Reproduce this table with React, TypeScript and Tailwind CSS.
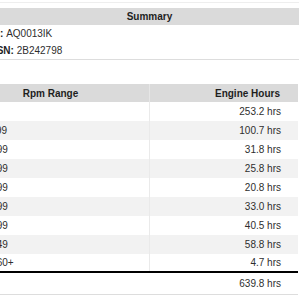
const summary = [
  { label: "ID:", value: "AQ0013IK" },
  { label: "ESN:", value: "2B242798" },
];

const rows = [
  { range: "0-599", hours: "253.2 hrs" },
  { range: "1000-1199", hours: "100.7 hrs" },
  { range: "1200-1599", hours: "31.8 hrs" },
  { range: "1600-1999", hours: "25.8 hrs" },
  { range: "2000-2399", hours: "20.8 hrs" },
  { range: "2400-2799", hours: "33.0 hrs" },
  { range: "2800-3199", hours: "40.5 hrs" },
  { range: "3200-3649", hours: "58.8 hrs" },
  { range: "3650-4560+", hours: "4.7 hrs" },
];

export default function App() {
  return (
    <div className="w-[300px] h-[300px] overflow-hidden bg-white text-[10px] text-[#2e2e2e] font-['Liberation_Sans',Arial,sans-serif]">
      <div className="pt-[2px]">
        <div className="w-[299px] border-t border-[#eeeeee]" />
      </div>

      {/* summary */}
      <div className="mt-[5px] w-[299px]">
        <div className="h-[17px] bg-[#dadada] flex items-center justify-center font-bold text-[#1e1e1e]">Summary</div>
        <div className="border-b border-[#dddddd]">
          {summary.map((s) => (
            <div key={s.label} className="h-[17px] flex items-center -ml-[10px] whitespace-nowrap">
              <span className="font-bold text-[#1e1e1e]">{s.label}</span>
              <span>&nbsp;{s.value}</span>
            </div>
          ))}
        </div>
      </div>

      {/* rpm table */}
      <div className="mt-[24px] -ml-[48px] w-[346px]">
        <div className="h-[18px] flex bg-[#dadada] font-bold text-[#1e1e1e]">
          <div className="w-[197px] flex items-center justify-center">Rpm Range</div>
          <div className="flex-1 flex items-center justify-end pr-[18px] border-l border-[#e6e6e6]">Engine Hours</div>
        </div>
        {rows.map((r, i) => (
          <div
            key={r.range}
            className={`h-[19px] flex ${i % 2 === 1 ? "bg-[#f2f2f2]" : "bg-white"} ${i === rows.length - 1 ? "border-b-2 border-black" : ""}`}
          >
            <div className="w-[197px] flex items-center pl-[8px] whitespace-nowrap">{r.range}</div>
            <div className="flex-1 flex items-center justify-end pr-[17px] border-l border-[#eaeaea]">{r.hours}</div>
          </div>
        ))}
        <div className="h-[22px] flex border-b border-[#dddddd]">
          <div className="w-[197px]" />
          <div className="flex-1 flex items-center justify-end pr-[17px]">639.8 hrs</div>
        </div>
      </div>
    </div>
  );
}
